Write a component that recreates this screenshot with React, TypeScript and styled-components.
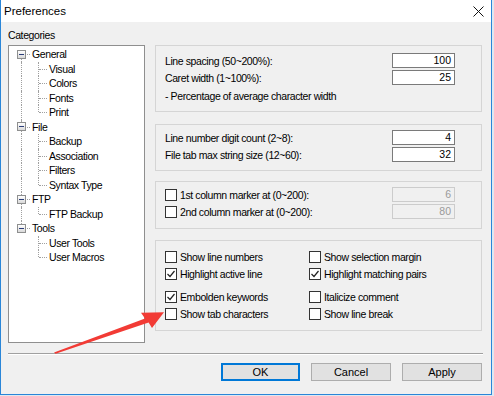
import styled, { createGlobalStyle } from 'styled-components';

const GlobalStyle = createGlobalStyle`
  html, body {
    margin: 0;
    padding: 0;
  }
  body {
    background: #dfe8f1;
    font-family: "Liberation Sans", Arial, sans-serif;
  }
`;

const Stage = styled.div`
    position: relative;
    width: 494px;
    height: 396px;
    overflow: hidden;
`;

const Window = styled.div`
    width: 492px;
    height: 395px;
    box-sizing: border-box;
    border: 1px solid #2a86d8;
    border-top: none;
    background: #f0f0f0;
    display: flex;
    flex-direction: column;
`;

const TitleBar = styled.div`
    height: 22px;
    flex: none;
    background: #fff;
    display: flex;
    align-items: center;
    justify-content: space-between;
    padding: 0 7px 0 3px;
    font-size: 11.5px;
    color: #000;
`;

const Main = styled.div`
    display: grid;
    grid-template-columns: 137px 1fr;
    column-gap: 10px;
    padding: 0 9px 0 7px;
    font-size: 10.5px;
    letter-spacing: -0.4px;
    color: #000;
`;

const LeftColumn = styled.div`
    display: flex;
    flex-direction: column;
`;

const Caption = styled.div`
    height: 23px;
    box-sizing: border-box;
    padding-top: 7px;
    line-height: 13px;
`;

const TreeBox = styled.div`
    height: 298px;
    box-sizing: border-box;
    border: 1px solid #8f8f8f;
    background: #fff;
    padding: 1px 0 0 4px;
`;

const TreeRow = styled.div`
    display: flex;
    height: 14.5px;
`;

type Vertical = 'full' | 'top' | 'bottom' | 'none';

const Cell = styled.div<{ $v: Vertical; $h?: boolean }>`
    position: relative;
    width: 17px;
    flex: none;

    &::before {
        content: '';
        display: ${p => (p.$v === 'none' ? 'none' : 'block')};
        position: absolute;
        left: 8px;
        top: ${p => (p.$v === 'bottom' ? '50%' : '0')};
        bottom: ${p => (p.$v === 'top' ? '50%' : '0')};
        border-left: 1px dotted #a0a0a0;
    }

    &::after {
        content: '';
        display: ${p => (p.$h ? 'block' : 'none')};
        position: absolute;
        left: 9px;
        right: 0;
        top: 50%;
        border-top: 1px dotted #a0a0a0;
    }
`;

const Expander = styled.span`
    position: absolute;
    z-index: 1;
    left: 4px;
    top: 50%;
    margin-top: -4.5px;
    width: 9px;
    height: 9px;
    box-sizing: border-box;
    border: 1px solid #8e8f8f;
    background: linear-gradient(#ffffff, #d9d9d9);

    &::after {
        content: '';
        position: absolute;
        left: 1px;
        right: 1px;
        top: 3px;
        height: 1px;
        background: #2c3e7a;
    }
`;

const TreeLabel = styled.span`
    padding-left: 2px;
    line-height: 14.5px;
    white-space: nowrap;
`;

const RightColumn = styled.div`
    padding-top: 23px;
    display: flex;
    flex-direction: column;
`;

const Group = styled.div<{ $h: number; $top: number; $mt?: number }>`
    height: ${p => p.$h}px;
    box-sizing: border-box;
    margin-top: ${p => p.$mt ?? 0}px;
    border: 1px solid #d5d5d5;
    padding: ${p => p.$top}px 26px 0 9px;
    display: flex;
    flex-direction: column;
    gap: 2px;
`;

const FieldRow = styled.div`
    display: flex;
    align-items: center;
    justify-content: space-between;
    height: 15px;
`;

const LabelWithBox = styled.label`
    display: flex;
    align-items: center;
    white-space: nowrap;
`;

const Note = styled.div`
    margin-top: 2px;
    height: 15px;
    line-height: 15px;
`;

const NumberBox = styled.div<{ $disabled?: boolean }>`
    width: 63px;
    height: 15px;
    box-sizing: border-box;
    border: 1px solid ${p => (p.$disabled ? '#cccccc' : '#7a7a7a')};
    background: ${p => (p.$disabled ? '#f0f0f0' : '#fff')};
    color: ${p => (p.$disabled ? '#9a9a9a' : '#000')};
    text-align: right;
    padding-right: 3px;
    line-height: 13px;
    letter-spacing: 0;
`;

const CheckBox = styled.span<{ $checked?: boolean }>`
    width: 12px;
    height: 12px;
    box-sizing: border-box;
    flex: none;
    border: 1px solid #333;
    background: #fff;
    margin-right: 3px;
    display: flex;
    align-items: center;
    justify-content: center;
`;

const CheckStack = styled.div`
    display: flex;
    flex-direction: column;
    gap: 5px;
`;

const CheckGrid = styled.div`
    display: grid;
    grid-template-columns: 144px 1fr;
    grid-auto-rows: 17.5px;
`;

const Separator = styled.div`
    margin: 10px 8px 0 7px;
    border-top: 1px solid #a0a0a0;
    border-bottom: 1px solid #fff;
`;

const ButtonRow = styled.div`
    display: flex;
    justify-content: flex-end;
    gap: 11px;
    margin-top: 8px;
    padding-right: 9px;
`;

const Button = styled.button<{ $w: number; $default?: boolean }>`
    width: ${p => p.$w}px;
    height: 18px;
    box-sizing: border-box;
    margin: 0;
    padding: 0;
    border: 1px solid ${p => (p.$default ? '#0078d7' : '#adadad')};
    box-shadow: ${p => (p.$default ? 'inset 0 0 0 1px #0078d7' : 'none')};
    background: #e1e1e1;
    font-family: "Liberation Sans", Arial, sans-serif;
    font-size: 11px;
    color: #000;
`;

const Overlay = styled.svg`
    position: absolute;
    left: 0;
    top: 0;
    pointer-events: none;
`;

const tree = [
    { label: 'General', children: ['Visual', 'Colors', 'Fonts', 'Print'] },
    { label: 'File', children: ['Backup', 'Association', 'Filters', 'Syntax Type'] },
    { label: 'FTP', children: ['FTP Backup'] },
    { label: 'Tools', children: ['User Tools', 'User Macros'] },
];

const options: [string, boolean][][] = [
    [
        ['Show line numbers', false],
        ['Show selection margin', false],
        ['Highlight active line', true],
        ['Highlight matching pairs', true],
    ],
    [
        ['Embolden keywords', true],
        ['Italicize comment', false],
        ['Show tab characters', false],
        ['Show line break', false],
    ],
];

const Check = ({ checked }: { checked?: boolean }) => (
    <CheckBox $checked={checked}>
        {checked && (
            <svg width="10" height="10" viewBox="0 0 10 10">
                <path d="M1.5 5 L4 7.5 L8.5 2" fill="none" stroke="#222" strokeWidth="1.2" />
            </svg>
        )}
    </CheckBox>
);

const Tree = () => (
    <TreeBox>
        {tree.map((node, i) => {
            const first = i === 0;
            const last = i === tree.length - 1;
            return (
                <div key={node.label}>
                    <TreeRow>
                        <Cell $v={first ? 'bottom' : last ? 'top' : 'full'} $h>
                            <Expander />
                        </Cell>
                        <TreeLabel>{node.label}</TreeLabel>
                    </TreeRow>
                    {node.children.map((child, j) => (
                        <TreeRow key={child}>
                            <Cell $v={last ? 'none' : 'full'} />
                            <Cell $v={j === node.children.length - 1 ? 'top' : 'full'} $h />
                            <TreeLabel>{child}</TreeLabel>
                        </TreeRow>
                    ))}
                </div>
            );
        })}
    </TreeBox>
);

const App = () => {
    return (
        <Stage>
            <GlobalStyle />
            <Window>
                <TitleBar>
                    <span>Preferences</span>
                    <svg width="11" height="11" viewBox="0 0 11 11">
                        <path d="M0.5 0.5 L10.5 10.5 M10.5 0.5 L0.5 10.5" stroke="#111" strokeWidth="1" />
                    </svg>
                </TitleBar>
                <Main>
                    <LeftColumn>
                        <Caption>Categories</Caption>
                        <Tree />
                    </LeftColumn>
                    <RightColumn>
                        <Group $h={67} $top={7}>
                            <FieldRow>
                                <span>Line spacing (50~200%):</span>
                                <NumberBox>100</NumberBox>
                            </FieldRow>
                            <FieldRow>
                                <span>Caret width (1~100%):</span>
                                <NumberBox>25</NumberBox>
                            </FieldRow>
                            <Note>- Percentage of average character width</Note>
                        </Group>
                        <Group $h={47} $top={5} $mt={12}>
                            <FieldRow>
                                <span>Line number digit count (2~8):</span>
                                <NumberBox>4</NumberBox>
                            </FieldRow>
                            <FieldRow>
                                <span>File tab max string size (12~60):</span>
                                <NumberBox>32</NumberBox>
                            </FieldRow>
                        </Group>
                        <Group $h={48} $top={5} $mt={10}>
                            <FieldRow>
                                <LabelWithBox>
                                    <Check />
                                    1st column marker at (0~200):
                                </LabelWithBox>
                                <NumberBox $disabled>6</NumberBox>
                            </FieldRow>
                            <FieldRow>
                                <LabelWithBox>
                                    <Check />
                                    2nd column marker at (0~200):
                                </LabelWithBox>
                                <NumberBox $disabled>80</NumberBox>
                            </FieldRow>
                        </Group>
                        <Group $h={91} $top={7} $mt={11}>
                            <CheckStack>
                                {options.map((block, b) => (
                                    <CheckGrid key={b}>
                                        {block.map(([text, checked]) => (
                                            <LabelWithBox key={text}>
                                                <Check checked={checked} />
                                                {text}
                                            </LabelWithBox>
                                        ))}
                                    </CheckGrid>
                                ))}
                            </CheckStack>
                        </Group>
                    </RightColumn>
                </Main>
                <Separator />
                <ButtonRow>
                    <Button $w={79} $default>OK</Button>
                    <Button $w={80}>Cancel</Button>
                    <Button $w={80}>Apply</Button>
                </ButtonRow>
            </Window>
            <Overlay width="494" height="396" viewBox="0 0 494 396">
                <polygon
                    points="54,352.6 145,318.4 141,312.8 164,312.3 152,328 148.6,322.6 55.6,353.8"
                    fill="#f23b35"
                />
            </Overlay>
        </Stage>
    );
};

export default App;
